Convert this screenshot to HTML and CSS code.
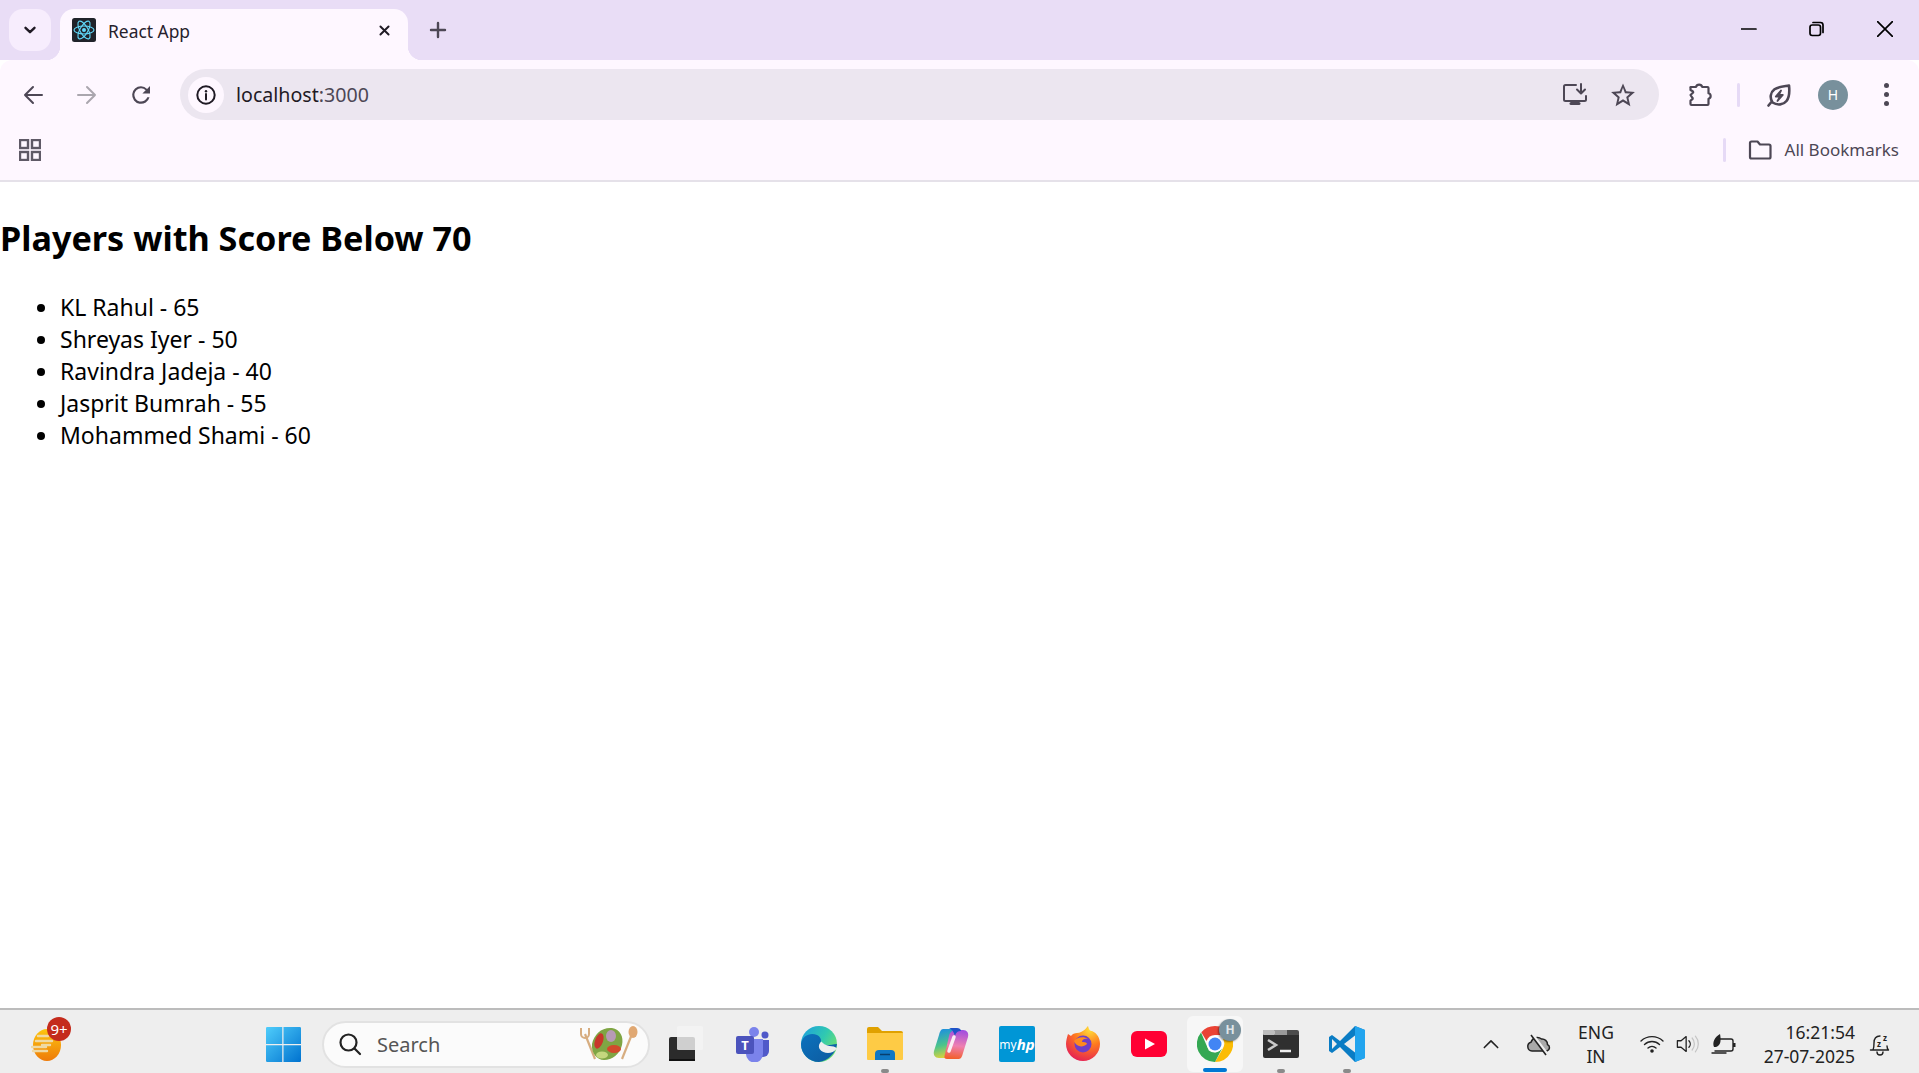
FILE: index.html
```html
<!DOCTYPE html>
<html lang="en">
<head>
<meta charset="utf-8">
<title>React App</title>
<link rel="stylesheet" href="styles.css">
</head>
<body>
<div class="browser">
  <header class="tabstrip">
    <button class="tab-search"><svg class="i16" viewBox="0 0 16 16"><path d="M3.500 5.800 8 10.200l4.500-4.400" class="s-dark thick"/></svg></button>
    <div class="tab">
      <svg class="favicon" viewBox="0 0 24 24">
        <rect width="24" height="24" rx="2.500" fill="#20232a"/>
        <g fill="none" stroke="#61dafb" stroke-width="1.100">
          <ellipse cx="12" cy="12" rx="10" ry="4"/>
          <ellipse cx="12" cy="12" rx="10" ry="4" transform="rotate(60 12 12)"/>
          <ellipse cx="12" cy="12" rx="10" ry="4" transform="rotate(120 12 12)"/>
        </g>
        <circle cx="12" cy="12" r="2" fill="#61dafb"/>
      </svg>
      <span class="tab-title">React App</span>
      <svg class="tab-close" viewBox="0 0 16 16"><path d="M3 3l10 10M13 3 3 13" class="s-dark thick"/></svg>
    </div>
    <button class="new-tab"><svg class="i18" viewBox="0 0 18 18"><path d="M9 2v14M2 9h14" class="s-grey thick"/></svg></button>
    <div class="window-controls">
      <span class="win-btn"><svg class="i16" viewBox="0 0 16 16"><path d="M0 8h15" class="s-black"/></svg></span>
      <span class="win-btn"><svg class="i16" viewBox="0 0 16 16"><rect x="1" y="4" width="10.500" height="10.500" rx="2.200" class="s-black"/><path d="M4 1.500h7.500a2.500 2.500 0 0 1 2.500 2.500v7.500" class="s-black"/></svg></span>
      <span class="win-btn"><svg class="i16" viewBox="0 0 16 16"><path d="M.5.5l15 15M15.500.5l-15 15" class="s-black"/></svg></span>
    </div>
  </header>

  <nav class="toolbar">
    <span class="nav-btn"><svg class="i24" viewBox="0 0 24 24"><path d="M21 12H4M12 4l-8 8 8 8" class="s-grey"/></svg></span>
    <span class="nav-btn"><svg class="i24" viewBox="0 0 24 24"><path d="M3 12h17M12 4l8 8-8 8" class="s-faint"/></svg></span>
    <span class="nav-btn"><svg class="i24" viewBox="0 0 24 24"><path fill="#4d4755" d="M18.100 5.900A8.900 8.900 0 0 0 12 3.200a8.800 8.800 0 1 0 8.500 11h-2.200a6.700 6.700 0 1 1-6.300-9c1.900 0 3.500.8 4.700 2L13.400 10.500H21V3z"/></svg></span>
    <div class="omnibox">
      <span class="info-chip"><svg class="i20" viewBox="0 0 20 20"><circle cx="10" cy="10" r="8.700" class="s-dark"/><path d="M10 9v5.500" class="s-dark"/><circle cx="10" cy="6.200" r="1.200" fill="#1f1a24"/></svg></span>
      <span class="url">localhost<span class="url-port">:3000</span></span>
      <span class="omni-icon">
        <svg class="i26" viewBox="0 0 26 26"><path d="M14 3H3.500A1.500 1.500 0 0 0 2 4.500v13A1.500 1.500 0 0 0 3.500 19h19a1.500 1.500 0 0 0 1.500-1.500V14" class="s-grey"/><path d="M9 21.500h8" class="s-grey wide"/><path d="M19 2v9M15 7.500l4 4 4-4" class="s-grey"/></svg>
      </span>
      <span class="omni-icon"><svg class="i26" viewBox="0 0 24 24"><path fill="#4d4755" d="M23 9.300l-7.900-.7L12 1.300 8.900 8.600l-7.900.7 6 5.200L5.200 22.300 12 18.200l6.800 4.100-1.800-7.800zM12 16l-4.100 2.500 1.100-4.700-3.600-3.100 4.800-.4L12 5.400l1.800 4.900 4.800.4-3.600 3.100 1.100 4.700z"/></svg></span>
    </div>
    <span class="ext-btn"><svg class="i26" viewBox="0 0 26 26"><path d="M3.500 5H9a3.200 3.200 0 0 1 6.200 0h5.300a1 1 0 0 1 1 1v5.200a2.900 2.900 0 0 1 0 5.600V22a1 1 0 0 1-1 1h-16a1 1 0 0 1-1-1v-3.300l1.700-1.300a1 1 0 0 0 .2-1.600L3.500 13l2.400-2.200a1 1 0 0 0-.1-1.500L3.500 8V6a1 1 0 0 1 0-1z" class="s-grey wide2"/></svg></span>
    <span class="divider"></span>
    <span class="leaf-btn"><svg class="i26" viewBox="0 0 26 26"><path d="M2.500 23.500 5 20.500M23 3.500c.8 7 .2 12-2.500 15.500-3 3.800-9 4.700-14 1.500C3.300 15.500 4.600 10.300 8.500 7.300 12 4.800 18 4.400 23 3.500z" class="s-grey wide3"/><path d="M15 8.500 9.800 14.500h4.200L11.500 19l5.300-6h-4z" class="s-grey bolt"/></svg></span>
    <span class="avatar">H</span>
    <span class="menu-btn"><i></i><i></i><i></i></span>
  </nav>

  <div class="bookmarks">
    <svg class="apps" viewBox="0 0 22 22"><g class="s-apps"><rect x="1" y="1" width="8" height="8"/><rect x="13" y="1" width="8" height="8"/><rect x="1" y="13" width="8" height="8"/><rect x="13" y="13" width="8" height="8"/></g></svg>
    <span class="divider bm-divider"></span>
    <svg class="folder" viewBox="0 0 24 20"><path d="M2 3a1.500 1.500 0 0 1 1.500-1.500h6l2.500 3h9A1.500 1.500 0 0 1 22.500 6v11a1.500 1.500 0 0 1-1.500 1.500H3.500A1.500 1.500 0 0 1 2 17z" class="s-grey wide2"/></svg>
    <span class="bm-label">All Bookmarks</span>
  </div>
</div>

<main class="page">
  <h2 class="heading">Players with Score Below 70</h2>
  <ul class="players">
    <li>KL Rahul - 65</li>
    <li>Shreyas Iyer - 50</li>
    <li>Ravindra Jadeja - 40</li>
    <li>Jasprit Bumrah - 55</li>
    <li>Mohammed Shami - 60</li>
  </ul>
</main>

<footer class="taskbar">
  <div class="weather">
    <svg class="weather-icon" viewBox="0 0 30 34">
      <defs><linearGradient id="sun" x1="0" y1="0" x2="0" y2="1"><stop offset="0" stop-color="#fdc60f"/><stop offset="1" stop-color="#ee7a08"/></linearGradient></defs>
      <ellipse cx="16" cy="17" rx="14" ry="16" fill="url(#sun)"/>
      <path d="M7 8h10M5 13h16M11 17h8M1 19h14M2 23h14" stroke="#efd9a4" stroke-width="2.400" stroke-linecap="round"/>
    </svg>
    <span class="weather-badge">9+</span>
  </div>
  <span class="slot">
    <svg class="win-logo" viewBox="0 0 28 28">
      <defs><linearGradient id="w" x1="0" y1="0" x2="1" y2="1"><stop offset="0" stop-color="#4fcdfb"/><stop offset="1" stop-color="#0072cf"/></linearGradient></defs>
      <path fill="url(#w)" d="M0 1a1 1 0 0 1 1-1h12v13.500H0zM14 0H27a1 1 0 0 1 1 1v12.500H14zM0 14.500h13V28H1a1 1 0 0 1-1-1zM14 14.500H28V27a1 1 0 0 1-1 1H14z"/>
    </svg>
  </span>
  <div class="search">
    <svg class="i24" viewBox="0 0 24 24"><circle cx="10.500" cy="10.500" r="8" class="s-ink"/><path d="M16.500 16.500 22 22" class="s-ink"/></svg>
    <span class="search-label">Search</span>
    <svg class="salad" viewBox="0 0 60 36">
      <path d="M7 8l10 25" stroke="#d7ad80" stroke-width="2.200" fill="none"/><path d="M3 2v6a4 4 0 0 0 8 0V2" stroke="#d7ad80" stroke-width="2" fill="none"/>
      <path d="M54 8 44 33" stroke="#d7ad80" stroke-width="2.200" fill="none"/><ellipse cx="55" cy="6" rx="4.500" ry="6" fill="#e0a873"/>
      <path d="M14 18C16 8 24 1 34 2c8 1 12 9 10 17-2 9-10 15-18 15-7 0-13-7-12-16z" fill="#7fa544"/>
      <ellipse cx="21" cy="15" rx="4" ry="8" fill="#c8372b" transform="rotate(20 21 15)"/><ellipse cx="36" cy="23" rx="7" ry="4" fill="#d24a2c"/>
      <ellipse cx="33" cy="10" rx="5" ry="6" fill="#b79ab6"/><ellipse cx="24" cy="29" rx="6" ry="3.500" fill="#c4d77e"/>
    </svg>
  </div>
  <span class="slot slot-first">
    <svg class="i36" viewBox="0 0 36 36">
      <rect x="1" y="11" width="26" height="24" rx="2" fill="#2b2b2b"/><rect x="1" y="33" width="26" height="2" fill="#111"/>
      <rect x="9" y="0" width="26" height="24" rx="1.500" fill="#f4f4f4" fill-opacity=".82"/>
    </svg>
  </span>
  <span class="slot">
    <svg class="i36" viewBox="0 0 36 36">
      <circle cx="19" cy="6" r="5" fill="#7b83eb"/><circle cx="30" cy="9" r="3.500" fill="#5059c9"/>
      <path d="M24 14h10v11a6 6 0 0 1-6 6h-4z" fill="#5059c9"/>
      <path d="M11 13h17v15a8.500 8.500 0 0 1-17 0z" fill="#7b83eb"/>
      <rect x="1" y="10" width="18" height="18" rx="2" fill="#4b53bc"/>
      <text x="10" y="24" class="teams-t">T</text>
    </svg>
  </span>
  <span class="slot">
    <svg class="i38" viewBox="0 0 38 38">
      <defs>
        <linearGradient id="e1" x1="0" y1="0" x2="1" y2=".6"><stop offset="0" stop-color="#1b9de2"/><stop offset=".6" stop-color="#30c9b0"/><stop offset="1" stop-color="#6fe070"/></linearGradient>
        <linearGradient id="e2" x1="0" y1="0" x2="1" y2="1"><stop offset="0" stop-color="#0c72bd"/><stop offset="1" stop-color="#0d5a9f"/></linearGradient>
      </defs>
      <circle cx="19" cy="19" r="18" fill="url(#e1)"/>
      <path d="M1 19C2 10 11 7 17 10c4 2 5 6 3 8 6 3 9 2 17 1-1 9-9 17-18 18C9 37 1 29 1 19z" fill="url(#e2)"/>
      <path d="M37 23.500c-5 6.500-14 5-17 1-2-3-1-6 1.500-8 1.500 2 4 4 8 4.500 3 .3 5.500.3 7.500 2.500z" fill="#eee"/>
    </svg>
  </span>
  <span class="slot slot-run">
    <svg class="i36" viewBox="0 0 36 34">
      <path d="M0 2a2 2 0 0 1 2-2h9l4 4h19a2 2 0 0 1 2 2v4H0z" fill="#e0a100"/>
      <path d="M0 6h36v26a1 1 0 0 1-1 1H1a1 1 0 0 1-1-1z" fill="#fecb45"/>
      <path d="M8 33v-6a4 4 0 0 1 4-4h12a4 4 0 0 1 4 4v6z" fill="#0f78c4"/><path d="M13 27.500h10" stroke="#083f6d" stroke-width="1.500"/>
    </svg>
  </span>
  <span class="slot">
    <svg class="i36" viewBox="0 0 36 36">
      <defs>
        <linearGradient id="c1" x1=".3" y1="0" x2=".5" y2="1"><stop offset="0" stop-color="#1d8fe0"/><stop offset=".55" stop-color="#4cc48a"/><stop offset="1" stop-color="#e3d438"/></linearGradient>
        <linearGradient id="c2" x1=".6" y1="0" x2=".5" y2="1"><stop offset="0" stop-color="#a04de0"/><stop offset=".55" stop-color="#ef7fb0"/><stop offset="1" stop-color="#f2602c"/></linearGradient>
      </defs>
      <path d="M10 3h12c2 0 3 1 2.500 3L20 26c-.5 3-3 6-7 6H6c-4 0-6-3-5-7L6 9c.7-3 2-6 4-6z" fill="url(#c1)"/>
      <path d="M26 33H14c-2 0-3-1-2.500-3L16 10c.5-3 3-6 7-6h7c4 0 6 3 5 7l-5 16c-.7 3-2 6-4 6z" fill="url(#c2)"/>
      <path d="M16 2h8c2 0 4 1 4 3-3 0-5 1-6 5-1-3-2-6-6-8z" fill="#1f52c8"/>
      <path d="M21 11 16 25" stroke="#fbeef4" stroke-width="3.500" stroke-linecap="round"/>
    </svg>
  </span>
  <span class="slot"><span class="myhp">my<b>hp</b></span></span>
  <span class="slot">
    <svg class="i36" viewBox="0 0 36 36">
      <defs>
        <radialGradient id="f1" cx=".7" cy=".1" r="1"><stop offset="0" stop-color="#ffdf3a"/><stop offset=".45" stop-color="#ff7a1e"/><stop offset="1" stop-color="#e3195a"/></radialGradient>
      </defs>
      <path d="M3 8c1 1 2 1 3 2 1-2 4-3 6-3C18 7 22 1 23 0c1 4 2 5 4 5 5 2 8 7 8 13a17 17 0 0 1-34 0c0-3 1-7 2-10z" fill="url(#f1)"/>
      <circle cx="18" cy="18" r="8.500" fill="#6f3ec8"/>
      <path d="M9 15c3-4 10-5 14-2-4-1-6 1-6 3 4 0 5 1 5 2-4 4-11 3-13-3z" fill="#ff8a1e"/>
    </svg>
  </span>
  <span class="slot">
    <svg class="yt" viewBox="0 0 36 26"><rect width="36" height="26" rx="6" fill="#ff0033"/><path d="M14 7.500v11l10-5.500z" fill="#fff"/></svg>
  </span>
  <span class="slot slot-active">
    <svg class="i36" viewBox="0 0 36 36">
      <path d="M18 0a18 18 0 0 1 15.600 9H18a9 9 0 0 0-8.500 6L4.300 6.300A18 18 0 0 1 18 0z" fill="#ea4335"/>
      <path d="M33.600 9A18 18 0 0 1 18 36l7.800-13.500A9 9 0 0 0 26 13z" fill="#fbbc04"/>
      <path d="M4 6.500 11.800 24.500A9 9 0 0 0 25 22.500L18 36A18 18 0 0 1 4 6.500z" fill="#34a853"/>
      <circle cx="18" cy="18" r="8.200" fill="#fff"/><circle cx="18" cy="18" r="6.500" fill="#4285f4"/>
    </svg>
    <span class="chrome-badge">H</span>
    <span class="active-bar"></span>
  </span>
  <span class="slot slot-run">
    <svg class="term" viewBox="0 0 36 28">
      <path d="M0 5V2a2 2 0 0 1 2-2h32a2 2 0 0 1 2 2v3z" fill="#4d4d4d"/><rect x="12" width="12" height="5" fill="#9a9a9a"/><rect y="0" width="12" height="5" rx="1" fill="#bdbdbd"/>
      <path d="M0 5h36v21a2 2 0 0 1-2 2H2a2 2 0 0 1-2-2z" fill="#2f2f2f"/>
      <path d="M5 10l8 5-8 5" stroke="#c8c8c8" stroke-width="2.500" fill="none"/><path d="M17 21h11" stroke="#eee" stroke-width="2.500"/>
    </svg>
  </span>
  <span class="slot slot-run">
    <svg class="i36" viewBox="0 0 36 36">
      <path d="M26 0 11 15 3 9 0 11v14l3 2 8-6 15 15 10-4V4z" fill="#0a7cc4"/>
      <path d="M26 0l10 4v28l-10 4z" fill="#22a4ee"/>
      <path d="M26 9.500 15 18l11 8.500z" fill="#eee"/><path d="M3 13v10l5-5z" fill="#eee"/>
    </svg>
  </span>

  <div class="tray">
    <span class="tray-48"><svg class="i16" viewBox="0 0 18 18"><path d="M1.500 13 9 5.500 16.500 13" class="s-tray"/></svg></span>
    <span class="tray-48"><svg class="i26" viewBox="0 0 26 24"><path d="M6 19a4.500 4.500 0 0 1-1-8.800C6.500 5.500 12 4 15.500 7a5.500 5.500 0 0 1 6 5.500A3.500 3.500 0 0 1 21 19z" fill="#a9a9a9" stroke="#222" stroke-width="1.500"/><path d="M6 2l15 20" stroke="#eee" stroke-width="3"/><path d="M5 3l15 20" stroke="#222" stroke-width="1.500"/></svg></span>
    <span class="lang">ENG<br>IN</span>
    <span class="tray-34"><svg class="i24" viewBox="0 0 24 20"><path d="M1 7a16 16 0 0 1 22 0M4.500 10.500a11 11 0 0 1 15 0M8 14a6 6 0 0 1 8 0" class="s-tray thin"/><circle cx="12" cy="17" r="1.800" fill="#222"/></svg></span>
    <span class="tray-34"><svg class="i24" viewBox="0 0 26 20"><path d="M1.500 6.500h4L11 2v16l-5.500-4.500h-4z" class="s-tray thin"/><path d="M14 6.500a5 5 0 0 1 0 7" class="s-tray thin"/><path d="M17.500 3.500a10 10 0 0 1 0 13M21 1.500a13 13 0 0 1 0 17" class="s-mute"/></svg></span>
    <span class="tray-34"><svg class="i26" viewBox="0 0 26 22"><path d="M9 6h11a2 2 0 0 1 2 2v8a2 2 0 0 1-2 2H4" class="s-tray thin"/><path d="M22 10h2.500v4H22z" fill="#222"/><path d="M1 20h14" class="s-tray thin"/><path d="M3 14c-2-5 1-10 6-13 1 5 1 10-2 12-1 1-3 1-4 1z" fill="#222"/></svg></span>
    <span class="clock">16:21:54<br>27-07-2025</span>
    <span class="bell"><svg class="i24" viewBox="0 0 24 24"><path d="M5 18c1-2 1-4 1-7 0-4 2-7 6-7M19 14c0 2 .5 3 1.500 4H2.500M9 20a3 3 0 0 0 6 0" class="s-tray thin"/><text x="9" y="15" class="zz">z</text><text x="15" y="9" class="zz">z</text></svg></span>
  </div>
</footer>
</body>
</html>
```

FILE: styles.css
```css
* { box-sizing: border-box; }
html, body { height: 100%; }
body {
  margin: 0;
  display: flex;
  flex-direction: column;
  height: 1073px;
  overflow: hidden;
  background: #fff;
  color: #000;
  font-family: "Noto Sans", "Open Sans", sans-serif;
}
svg { display: block; flex: none; fill: none; }
button { border: 0; padding: 0; background: none; }

.i16 { width: 16px; height: 16px; }
.i18 { width: 18px; height: 18px; }
.i20 { width: 20px; height: 20px; }
.i24 { width: 24px; height: 24px; }
.i26 { width: 26px; height: 26px; }
.i36 { width: 36px; height: 36px; }
.i38 { width: 38px; height: 38px; }

.s-dark, .s-grey, .s-faint, .s-black, .s-ink, .s-tray, .s-mute { fill: none; stroke-width: 2; stroke-linecap: round; stroke-linejoin: round; }
.s-dark { stroke: #1f1a24; }
.s-grey { stroke: #4d4755; }
.s-faint { stroke: #aaa6ae; }
.s-black { stroke: #000; stroke-width: 1.700; }
.s-ink { stroke: #222; stroke-width: 2.200; }
.s-tray { stroke: #222; stroke-width: 1.800; }
.s-mute { stroke: #c4c4c4; stroke-width: 1.300; }
.thin { stroke-width: 1.400; }
.thick { stroke-width: 2.400; }
.wide { stroke-width: 3; }
.wide2 { stroke-width: 2.200; }
.wide3 { stroke-width: 2.600; }
.bolt { stroke-width: 1.800; }
.s-apps rect { fill: none; stroke: #5f5a66; stroke-width: 2.400; }

/* browser chrome */
.browser { flex: none; }
.tabstrip {
  height: 60px;
  display: flex;
  align-items: flex-start;
  padding: 9px 0 0 9px;
  background: #e9ddf6;
}
.tab-search {
  width: 42px;
  height: 42px;
  border-radius: 14px;
  background: #f7edfd;
  display: flex;
  align-items: center;
  justify-content: center;
}
.tab {
  position: relative;
  width: 348px;
  height: 51px;
  margin-left: 9px;
  padding: 0 17px 0 12px;
  display: flex;
  align-items: center;
  gap: 12px;
  background: #fef7ff;
  border-radius: 14px 14px 0 0;
}
.tab::before, .tab::after {
  content: "";
  position: absolute;
  bottom: 0;
  width: 14px;
  height: 14px;
}
.tab::before { left: -14px; background: radial-gradient(circle at 0 0, transparent 14px, #fef7ff 14.500px); }
.tab::after { right: -14px; background: radial-gradient(circle at 100% 0, transparent 14px, #fef7ff 14.500px); }
.favicon { width: 24px; height: 24px; margin-top: -9px; }
.tab-title { flex: 1; font-size: 17.400px; color: #26212c; margin-top: -8px; }
.tab-close { width: 13px; height: 13px; margin-top: -9px; }
.new-tab {
  width: 18px;
  height: 18px;
  margin: 12px 0 0 21px;
}
.window-controls { margin-left: auto; display: flex; }
.win-btn {
  width: 68px;
  height: 40px;
  display: flex;
  align-items: center;
  justify-content: center;
}

.toolbar {
  height: 60px;
  padding: 9px 20px 0 6px;
  display: flex;
  align-items: center;
  background: #fef7ff;
  border-radius: 12px 12px 0 0;
}
.nav-btn {
  width: 54px;
  height: 42px;
  display: flex;
  align-items: center;
  justify-content: center;
}
.omnibox {
  width: 1479px;
  height: 51px;
  margin-left: 12px;
  padding: 0 12px 0 8px;
  display: flex;
  align-items: center;
  border-radius: 26px;
  background: #ece6f0;
}
.info-chip {
  width: 36px;
  height: 36px;
  border-radius: 50%;
  background: #fef7ff;
  display: flex;
  align-items: center;
  justify-content: center;
}
.url { flex: 1; margin-left: 12px; font-size: 19.600px; color: #1f1a24; }
.url-port { color: #4d4755; }
.omni-icon {
  width: 48px;
  height: 40px;
  display: flex;
  align-items: center;
  justify-content: center;
}
.ext-btn {
  margin-left: 28px;
  width: 26px;
  height: 26px;
}
.divider {
  width: 3px;
  height: 24px;
  margin-left: 24px;
  border-radius: 2px;
  background: #e6daf6;
}
.leaf-btn { margin-left: 26px; }
.avatar {
  width: 30px;
  height: 30px;
  margin-left: 26px;
  border-radius: 50%;
  background: #78909c;
  color: #fff;
  font-size: 14px;
  display: flex;
  align-items: center;
  justify-content: center;
}
.menu-btn {
  margin-left: 33px;
  width: 10px;
  display: flex;
  flex-direction: column;
  align-items: center;
  gap: 4px;
}
.menu-btn i { width: 5px; height: 5px; border-radius: 50%; background: #4d4755; }

.bookmarks {
  height: 62px;
  padding: 0 20px 0 19px;
  display: flex;
  align-items: center;
  background: #fef7ff;
  border-bottom: 2px solid #e5e1e9;
}
.apps { width: 22px; height: 22px; }
.bm-divider { margin-left: auto; }
.folder { width: 24px; height: 20px; margin: 0 0 0 22px; }
.bm-label { margin: -2px 0 0 13px; font-size: 17px; color: #4d4755; }

/* page */
.page { flex: 1; min-height: 0; }
.heading { margin: 32px 0 0; font-size: 34.200px; line-height: 48px; font-weight: 700; }
.players {
  margin: 29px 0 0;
  padding: 0 0 0 60px;
  list-style: disc;
  font-size: 23px;
  line-height: 32px;
}

/* taskbar */
.taskbar {
  flex: none;
  height: 65px;
  display: flex;
  align-items: center;
  padding: 5px 21px 0 13px;
  background: #eeeeee;
  border-top: 2px solid #bcbcbc;
}
.weather {
  position: relative;
  width: 237px;
  height: 58px;
  display: flex;
  align-items: center;
  padding-left: 18px;
}
.weather-icon { width: 30px; height: 34px; margin-top: 2px; }
.weather-badge {
  position: absolute;
  left: 34px;
  top: 2px;
  width: 24px;
  height: 24px;
  border-radius: 50%;
  background: #c42b1c;
  color: #fff;
  font-size: 15px;
  line-height: 24px;
  text-align: center;
}
.slot {
  position: relative;
  width: 66px;
  height: 58px;
  display: flex;
  align-items: center;
  justify-content: center;
}
.slot-first { margin-right: 4px; padding-left: 6px; }
.win-logo { width: 35px; height: 35px; }
.search {
  width: 328px;
  height: 47px;
  margin: 0 0 0 6px;
  padding: 0 10px 0 14px;
  display: flex;
  align-items: center;
  border: 2px solid #e2e2e2;
  border-radius: 24px;
  background: #fbfbfb;
}
.search-label { flex: 1; margin-left: 15px; font-size: 20px; color: #555; }
.salad { width: 60px; height: 36px; }
.teams-t { font: 700 13px "Noto Sans", sans-serif; fill: #fff; text-anchor: middle; }
.myhp {
  width: 36px;
  height: 36px;
  border-radius: 2px;
  background: #0096d6;
  color: #fff;
  font-size: 12px;
  display: flex;
  align-items: center;
  justify-content: center;
}
.myhp b { font-style: italic; font-size: 15px; }
.yt { width: 36px; height: 26px; }
.term { width: 36px; height: 28px; }
.slot-active {
  height: 56px;
  background: #f7f7f7;
  border-radius: 6px;
  margin: 0 5px;
  width: 56px;
}
.chrome-badge {
  position: absolute;
  right: 2px;
  top: 3px;
  width: 22px;
  height: 22px;
  border-radius: 50%;
  background: #78909c;
  color: #dfe5e8;
  font-size: 12px;
  font-weight: 700;
  line-height: 22px;
  text-align: center;
  box-shadow: -1px 1px 2px rgba(0,0,0,.4);
}
.active-bar {
  position: absolute;
  left: 16px;
  bottom: 0;
  width: 24px;
  height: 4px;
  border-radius: 2px;
  background: #0078d4;
}
.slot-run::after {
  content: "";
  position: absolute;
  left: 29px;
  bottom: 0;
  width: 8px;
  height: 4px;
  border-radius: 2px;
  background: #8a8a8a;
}
.tray {
  margin-left: auto;
  display: flex;
  align-items: center;
  color: #222;
}
.tray-48 { width: 48px; display: flex; justify-content: center; }
.tray-34 { width: 36px; display: flex; justify-content: center; }
.lang { width: 66px; margin-right: 5px; font-size: 17.500px; line-height: 24px; text-align: center; white-space: nowrap; }
.clock { width: 113px; font-size: 17.500px; line-height: 24px; text-align: right; white-space: nowrap; }
.bell { width: 36px; margin-left: 7px; display: flex; justify-content: center; }
.zz { font: 700 8px "Noto Sans", sans-serif; fill: #222; }
```
